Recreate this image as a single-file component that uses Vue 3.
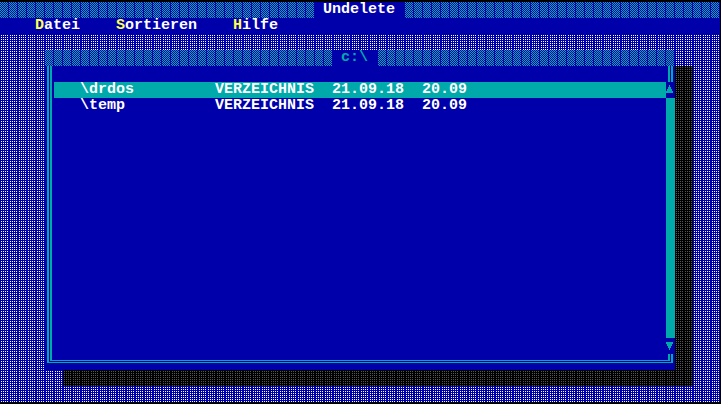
<script setup>
const menus = ['Datei', 'Sortieren', 'Hilfe']
const entries = [
  { name: '\\drdos', kind: 'VERZEICHNIS', date: '21.09.18', time: '20.09' },
  { name: '\\temp', kind: 'VERZEICHNIS', date: '21.09.18', time: '20.09' },
]
const selected = 0
</script>

<template>
  <main class="screen">
    <svg class="defs" width="0" height="0">
      <defs>
        <pattern id="hatch" width="9" height="2" patternUnits="userSpaceOnUse">
          <path d="M1 1h1v1h-1zM3 1h1v1h-1zM5 1h1v1h-1zM7 1h1v1h-1zM0 0h1v1h-1zM2 0h1v1h-1zM4 0h1v1h-1zM6 0h1v1h-1z" fill="#00aaaa" shape-rendering="crispEdges" />
        </pattern>
      </defs>
    </svg>
    <header class="bar">
      <svg class="hatch" height="16"><rect width="100%" height="16" fill="url(#hatch)" /></svg>
      <h1 class="app-title">Undelete</h1>
      <svg class="hatch" height="16"><rect width="100%" height="16" fill="url(#hatch)" /></svg>
    </header>
    <nav class="menu">
      <span v-for="m in menus" :key="m" class="menu-item"><b class="key">{{ m[0] }}</b>{{ m.slice(1) }}</span>
    </nav>
    <section class="desktop">
      <div class="shadow"></div>
      <div class="window">
        <div class="bar">
          <svg class="hatch" height="16"><rect width="100%" height="16" fill="url(#hatch)" /></svg>
          <h2 class="path">c:\</h2>
          <svg class="hatch" height="16"><rect width="100%" height="16" fill="url(#hatch)" /></svg>
        </div>
        <div class="body">
          <div class="edge"></div>
          <div class="list">
            <div v-for="(e, i) in entries" :key="e.name" class="entry" :class="{ selected: i === selected }">
              <span>{{ e.name }}</span><span>{{ e.kind }}</span><span>{{ e.date }}</span><span>{{ e.time }}</span>
            </div>
          </div>
          <div class="scroll">
            <div class="cap"></div>
            <svg class="arrow" width="9" height="16" shape-rendering="crispEdges"><path d="M3 3h1v2h1v2h1v2h1v2h-7v-2h1v-2h1v-2h1z" /></svg>
            <div class="track"></div>
            <svg class="arrow" width="9" height="16" shape-rendering="crispEdges"><path d="M0 4h7v2h-1v2h-1v2h-1v2h-1v-2h-1v-2h-1v-2h-1z" /></svg>
          </div>
        </div>
        <svg class="bottom" width="630" height="16" shape-rendering="crispEdges">
          <path d="M2 0h2v8h622v-8h2v9h-626zM5 0h2v6h616v-6h2v7h-620z" />
        </svg>
      </div>
    </section>
  </main>
</template>

<style>
body {
  background: #000;
}
</style>

<style scoped>
.screen {
  display: flex;
  flex-direction: column;
  box-sizing: border-box;
  width: 721px;
  height: 404px;
  padding: 2px 1px 2px 0;
  background: #000;
  color: #fff;
  font: bold 15px/16px "Liberation Mono", monospace;
  white-space: pre;
  overflow: hidden;
}
.defs {
  position: absolute;
}
.bar {
  display: flex;
  height: 16px;
  background: #0000aa;
}
.hatch {
  display: block;
  flex: 1 1 0;
  min-width: 0;
}
.app-title,
.path {
  margin: 0;
  padding: 0 10px 0 8px;
  font: inherit;
}
.bar .app-title {
  width: 72px;
}
.path {
  width: 27px;
  color: #00aaaa;
}
.window .hatch:first-child {
  flex: 0 0 288px;
}
.bar .app-title + .hatch {
  flex: 0 0 315px;
}
.menu {
  display: flex;
  gap: 36px;
  height: 16px;
  padding-left: 35px;
  background: #0000aa;
}
.key {
  color: #ffff55;
}
.desktop,
.shadow {
  background-image:
    linear-gradient(var(--ground) 50%, transparent 50%),
    linear-gradient(90deg, var(--ground) 0 1px, var(--dot) 1px 2px, var(--ground) 2px 3px, var(--dot) 3px 4px, var(--ground) 4px 5px, var(--dot) 5px 6px, var(--ground) 6px 7px, var(--dot) 7px 8px, var(--ground) 8px 9px);
  background-size: 9px 2px;
}
.desktop {
  --ground: #0000aa;
  --dot: #fff;
  display: grid;
  flex: 1;
  grid-template: 320px / 630px;
  padding: 16px 0 0 45px;
}
.shadow {
  --ground: #000;
  --dot: #555;
  grid-area: 1 / 1;
  margin: 16px -18px -16px 18px;
}
.window {
  grid-area: 1 / 1;
  display: flex;
  flex-direction: column;
  z-index: 1;
  background: #0000aa;
}
.body {
  display: flex;
  height: 288px;
}
.edge {
  width: 1px;
  margin: 0 2px;
  border-left: 2px solid #00aaaa;
  border-right: 2px solid #00aaaa;
}
.list {
  flex: 1;
  padding-top: 16px;
}
.entry {
  display: grid;
  grid-template-columns: 135px 117px 90px 45px;
  height: 16px;
  padding-left: 26px;
}
.selected {
  background: #00aaaa;
}
.scroll {
  display: flex;
  flex-direction: column;
  width: 9px;
}
.cap {
  width: 1px;
  height: 16px;
  margin-left: 2px;
  border-left: 2px solid #00aaaa;
  border-right: 2px solid #00aaaa;
}
.track {
  flex: 1;
  background: #00aaaa;
}
.arrow,
.bottom {
  display: block;
  fill: #00aaaa;
}
</style>
